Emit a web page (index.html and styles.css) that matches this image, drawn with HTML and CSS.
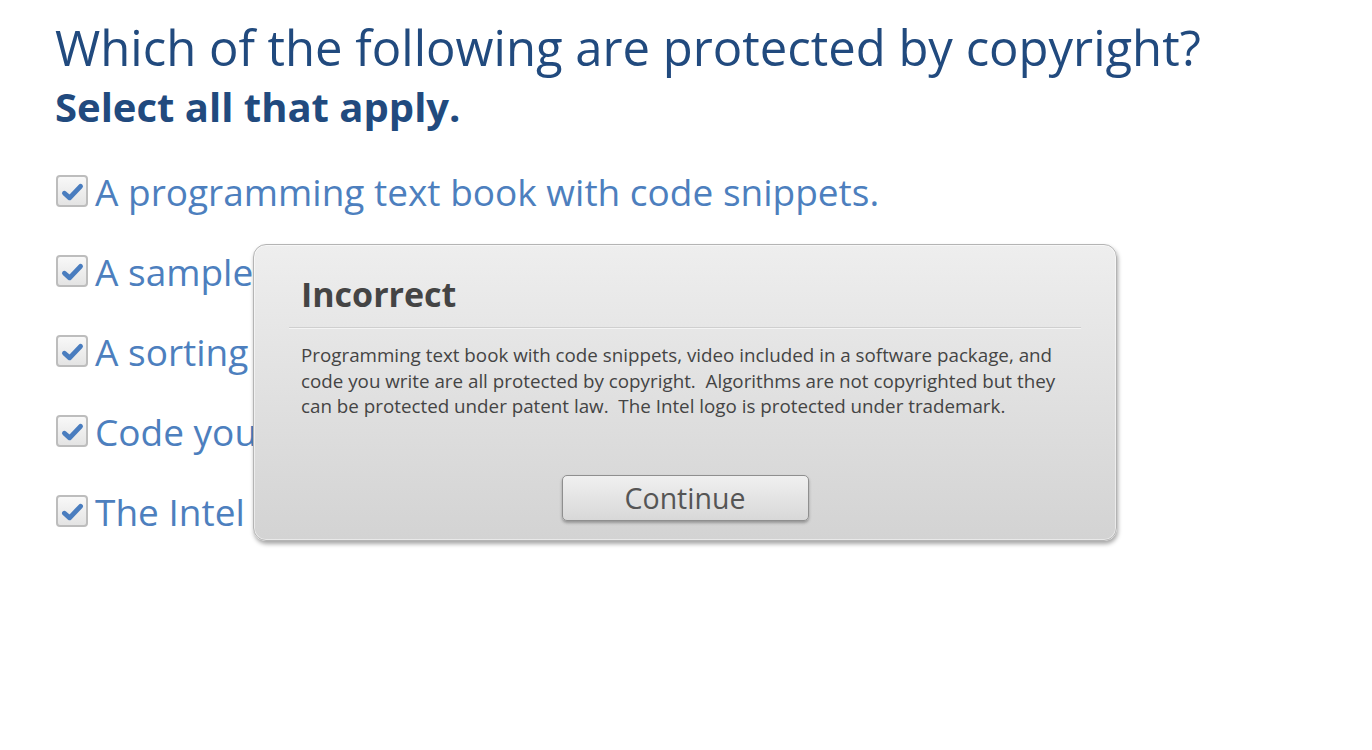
FILE: index.html
```html
<!DOCTYPE html>
<html>
<head>
<meta charset="utf-8">
<link rel="stylesheet" href="styles.css">
</head>
<body>
<div class="page">
  <h1 class="question">Which of the following are protected by copyright?</h1>
  <h2 class="instruction">Select all that apply.</h2>
  <ul class="options">
    <li class="option"><span class="box"><svg viewBox="0 0 20 20" class="check"><path d="M3 11.5 L7.5 15.5 L17 5.5" /></svg></span><span class="label">A programming text book with code snippets.</span></li>
    <li class="option"><span class="box"><svg viewBox="0 0 20 20" class="check"><path d="M3 11.5 L7.5 15.5 L17 5.5" /></svg></span><span class="label">A sample video included in a software package.</span></li>
    <li class="option"><span class="box"><svg viewBox="0 0 20 20" class="check"><path d="M3 11.5 L7.5 15.5 L17 5.5" /></svg></span><span class="label">A sorting algorithm.</span></li>
    <li class="option"><span class="box"><svg viewBox="0 0 20 20" class="check"><path d="M3 11.5 L7.5 15.5 L17 5.5" /></svg></span><span class="label">Code you write.</span></li>
    <li class="option"><span class="box"><svg viewBox="0 0 20 20" class="check"><path d="M3 11.5 L7.5 15.5 L17 5.5" /></svg></span><span class="label">The Intel logo.</span></li>
  </ul>
  <div class="modal">
    <div class="modal-title">Incorrect</div>
    <div class="modal-sep"></div>
    <p class="modal-text">Programming text book with code snippets, video included in a software package, and code you write are all protected by copyright.&nbsp; Algorithms are not copyrighted but they can be protected under patent law.&nbsp; The Intel logo is protected under trademark.</p>
    <div class="modal-actions"><button class="btn">Continue</button></div>
  </div>
</div>
</body>
</html>
```
FILE: styles.css
```css
html, body {
  margin: 0;
  padding: 0;
  background: #ffffff;
}
body {
  font-family: "Open Sans", "Noto Sans", sans-serif;
}
.page {
  position: relative;
  width: 1372px;
  height: 750px;
  padding: 0 0 0 55px;
  box-sizing: border-box;
}
.question {
  margin: 0;
  padding-top: 17px;
  font-size: 49px;
  font-weight: 400;
  line-height: 60px;
  color: #214a7e;
}
.instruction {
  margin: 10px 0 0 0;
  font-size: 40px;
  font-weight: 700;
  line-height: 40px;
  color: #214a7e;
}
.options {
  list-style: none;
  margin: 0;
  padding: 39px 0 0 0;
  display: flex;
  flex-direction: column;
  gap: 30px;
}
.option {
  display: flex;
  align-items: center;
  height: 50px;
  gap: 7px;
}
.box {
  width: 28px;
  height: 28px;
  border: 2.5px solid #bdbdbd;
  border-radius: 4px;
  background: linear-gradient(#f8f8f8, #e4e4e4);
  display: flex;
  align-items: center;
  justify-content: center;
  flex: none;
  margin-left: 1px;
}
.check {
  width: 23px;
  height: 23px;
}
.check path {
  fill: none;
  stroke: #4a7dbf;
  stroke-width: 4.2;
  stroke-linecap: round;
  stroke-linejoin: round;
}
.label {
  font-size: 37px;
  color: #4d7fbe;
  white-space: nowrap;
}
.modal {
  position: absolute;
  left: 253px;
  top: 244px;
  width: 864px;
  height: 297px;
  box-sizing: border-box;
  border: 1px solid #b4b4b4;
  border-radius: 13px;
  background: linear-gradient(#eeeeee, #d3d3d3);
  box-shadow: 1px 3px 4px rgba(0,0,0,0.35), inset 0 0 0 1px rgba(255,255,255,0.5);
  padding: 0 35px;
}
.modal-title {
  padding: 27px 0 0 12px;
  font-size: 34px;
  font-weight: 700;
  line-height: 44px;
  color: #444444;
}
.modal-sep {
  margin-top: 11px;
  height: 1px;
  background: #cfcfcf;
  border-bottom: 1px solid #f4f4f4;
}
.modal-text {
  margin: 14px 0 0 0;
  padding: 0 12px;
  max-width: 770px;
  font-size: 18.8px;
  line-height: 25.5px;
  color: #444444;
}
.modal-actions {
  display: flex;
  justify-content: center;
  padding-top: 55px;
}
.btn {
  width: 247px;
  height: 46px;
  border: 1px solid #8f8f8f;
  border-radius: 5px;
  background: linear-gradient(#f0f0f0, #d8d8d8);
  box-shadow: 0 2px 3px rgba(0,0,0,0.3);
  font-family: "Open Sans", "Noto Sans", sans-serif;
  font-size: 28.5px;
  color: #555555;
  padding: 0;
}
```
